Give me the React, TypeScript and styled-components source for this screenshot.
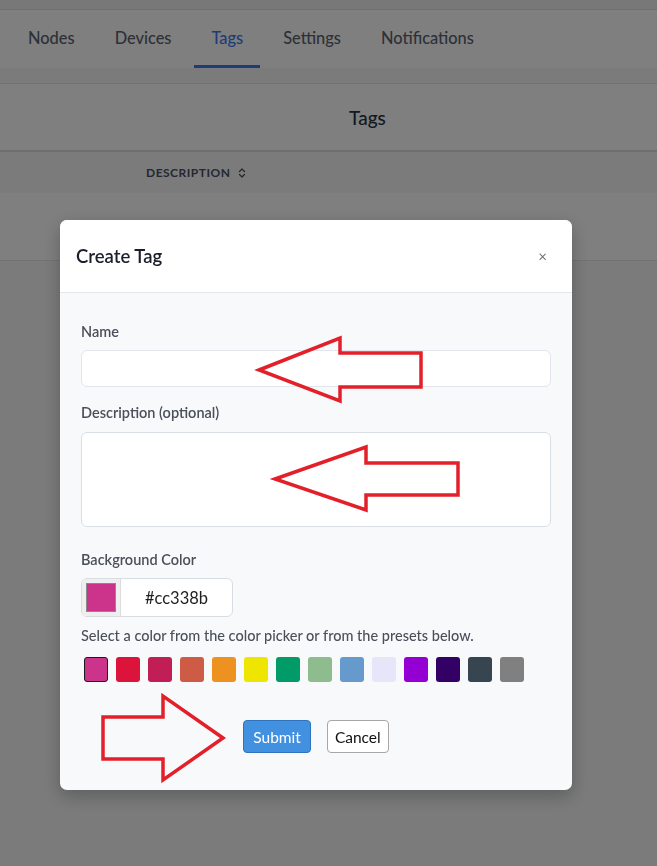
import React, { useState } from 'react';
import styled, { createGlobalStyle } from 'styled-components';
import { ChevronsUpDown } from 'lucide-react';

const GlobalStyle = createGlobalStyle`
  * {
    box-sizing: border-box;
  }

  body {
    margin: 0;
    font-family: Lato, "Liberation Sans", sans-serif;
    background: #f6f7f9;
    color: #1a202c;
  }
`;

const Page = styled.div`
  min-height: 100vh;
  background: #f6f7f9;
`;

const TopStrip = styled.div`
  height: 10px;
  background: #f0f1f3;
  border-bottom: 1px solid #dcdfe4;
`;

const TabBar = styled.nav`
  height: 58px;
  background: #ffffff;
  display: flex;
  align-items: stretch;
  gap: 6px;
  padding-left: 11px;
`;

const Tab = styled.div<{ active?: boolean }>`
  display: flex;
  align-items: center;
  padding: 0 17px;
  font-size: 16.4px;
  font-weight: 500;
  color: ${props => (props.active ? '#3d78f0' : '#5a6270')};
  border-bottom: 3px solid ${props => (props.active ? '#3d78f0' : 'transparent')};
`;

const Spacer = styled.div`
  height: 15px;
  background: #f6f7f9;
`;

const PanelHeader = styled.header`
  height: 69px;
  background: #ffffff;
  border-top: 1px solid #e2e5ea;
  border-bottom: 2px solid #d8dce2;
  display: flex;
  align-items: center;
  justify-content: center;
  padding-left: 78px;
  font-size: 19px;
  font-weight: 500;
  color: #2d3340;
`;

const TableHead = styled.div`
  height: 41px;
  background: #f6f7f9;
  display: flex;
  align-items: center;
  padding-left: 146px;
  gap: 6px;
  font-size: 12px;
  font-weight: 700;
  letter-spacing: 0.5px;
  color: #4a5060;
`;

const TableRow = styled.div`
  height: 68px;
  background: #ffffff;
  border-bottom: 1px solid #e2e5ea;
`;

const Overlay = styled.div`
  position: fixed;
  inset: 0;
  background: rgba(0, 0, 0, 0.5);
  display: flex;
  align-items: flex-start;
  padding: 220px 0 0 60px;
`;

const Modal = styled.div`
  width: 512px;
  border-radius: 7px;
  overflow: hidden;
  background: #f8f9fb;
  box-shadow: 0 6px 18px rgba(0, 0, 0, 0.25);
`;

const ModalHeader = styled.div`
  height: 73px;
  background: #ffffff;
  border-bottom: 1px solid #e3e6ea;
  display: flex;
  align-items: center;
  justify-content: space-between;
  padding: 0 25px 0 16px;
`;

const ModalTitle = styled.h2`
  margin: 0;
  font-size: 18.5px;
  font-weight: 600;
  color: #1a1f2b;
`;

const CloseButton = styled.button`
  border: none;
  background: none;
  padding: 0;
  font-family: inherit;
  font-size: 15px;
  color: #6b7280;
  cursor: pointer;
  line-height: 1;
`;

const ModalBody = styled.div`
  padding: 29px 21px 37px 21px;
  display: flex;
  flex-direction: column;
`;

const Label = styled.label<{ gap?: number }>`
  display: block;
  font-size: 14.5px;
  line-height: 20px;
  font-weight: 600;
  color: #4a4f5a;
  margin-top: ${props => props.gap ?? 0}px;
  margin-bottom: 8px;
`;

const TextInput = styled.input`
  width: 100%;
  height: 37px;
  border: 1px solid #e2e6ec;
  border-radius: 6px;
  background: #ffffff;
  padding: 0 12px;
  font-family: inherit;
  font-size: 14px;
  outline: none;
`;

const TextArea = styled.textarea`
  width: 100%;
  height: 95px;
  margin-top: 1px;
  border: 1px solid #dadfe6;
  border-radius: 6px;
  background: #ffffff;
  padding: 8px 12px;
  font-family: inherit;
  font-size: 14px;
  resize: none;
  outline: none;
`;

const ColorField = styled.div`
  width: 152px;
  height: 39px;
  display: flex;
  border: 1px solid #d8dce3;
  border-radius: 6px;
  overflow: hidden;
  background: #ffffff;
`;

const ColorWell = styled.div`
  width: 39px;
  flex-shrink: 0;
  background: #efefef;
  border-right: 1px solid #dcdcdc;
  display: flex;
  align-items: center;
  justify-content: center;
`;

const ColorChip = styled.div<{ color: string }>`
  width: 30px;
  height: 29px;
  background: ${props => props.color};
  border: 1px solid #8a8a8a;
`;

const ColorText = styled.div`
  flex: 1;
  display: flex;
  align-items: center;
  justify-content: center;
  font-size: 16.5px;
  color: #1f1f1f;
`;

const HelpText = styled.p`
  margin: 10px 0 0 0;
  font-size: 14.5px;
  line-height: 18px;
  font-weight: 500;
  color: #4a4f5a;
`;

const Swatches = styled.div`
  display: flex;
  gap: 8px;
  margin: 12px 0 0 3px;
`;

const Swatch = styled.button<{ color: string; selected?: boolean }>`
  width: 24px;
  height: 25px;
  padding: 0;
  border-radius: 3px;
  background: ${props => props.color};
  border: ${props => (props.selected ? '1.5px solid #1a1a1a' : 'none')};
  cursor: pointer;
`;

const Actions = styled.div`
  display: flex;
  justify-content: center;
  gap: 16px;
  margin-top: 38px;
`;

const Button = styled.button<{ primary?: boolean }>`
  height: 33px;
  padding: 0 ${props => (props.primary ? 9 : 7)}px;
  border-radius: 4px;
  font-family: inherit;
  font-size: 15.5px;
  cursor: pointer;
  background: ${props => (props.primary ? '#4290e0' : '#ffffff')};
  color: ${props => (props.primary ? '#ffffff' : '#111111')};
  border: 1px solid ${props => (props.primary ? '#2f73bf' : '#a7a7a7')};
`;

const Annotations = styled.svg`
  position: fixed;
  inset: 0;
  width: 100%;
  height: 100%;
  pointer-events: none;
`;

const presets = [
  '#cc338b',
  '#dc143c',
  '#c21e56',
  '#cd5b45',
  '#ed9121',
  '#eee600',
  '#009b67',
  '#8fbc8f',
  '#6699cc',
  '#e6e6fa',
  '#9400d3',
  '#330066',
  '#36454f',
  '#808080',
];

const tabs = ['Nodes', 'Devices', 'Tags', 'Settings', 'Notifications'];

// red hand-drawn annotation arrows sitting on top of the screenshot
const arrows = [
  '259,370 340,338 340,353 421,353 421,387 340,387 340,401',
  '275,479 366,447 366,463 458,463 458,495 366,495 366,510',
  '223,738 163,696 163,717 103,717 103,759 163,759 163,780',
];

const App: React.FC = () => {
  const [color, setColor] = useState('#cc338b');

  return (
    <>
      <GlobalStyle />
      <Page>
        <TopStrip />
        <TabBar>
          {tabs.map(tab => (
            <Tab key={tab} active={tab === 'Tags'}>
              {tab}
            </Tab>
          ))}
        </TabBar>
        <Spacer />
        <PanelHeader>Tags</PanelHeader>
        <TableHead>
          DESCRIPTION
          <ChevronsUpDown size={12} strokeWidth={2.5} />
        </TableHead>
        <TableRow />
      </Page>

      <Overlay>
        <Modal>
          <ModalHeader>
            <ModalTitle>Create Tag</ModalTitle>
            <CloseButton>×</CloseButton>
          </ModalHeader>
          <ModalBody>
            <Label>Name</Label>
            <TextInput />
            <Label gap={16}>Description (optional)</Label>
            <TextArea />
            <Label gap={23}>Background Color</Label>
            <ColorField>
              <ColorWell>
                <ColorChip color={color} />
              </ColorWell>
              <ColorText>{color}</ColorText>
            </ColorField>
            <HelpText>Select a color from the color picker or from the presets below.</HelpText>
            <Swatches>
              {presets.map(preset => (
                <Swatch
                  key={preset}
                  color={preset}
                  selected={preset === color}
                  onClick={() => setColor(preset)}
                />
              ))}
            </Swatches>
            <Actions>
              <Button primary>Submit</Button>
              <Button>Cancel</Button>
            </Actions>
          </ModalBody>
        </Modal>
      </Overlay>

      <Annotations viewBox="0 0 657 866" preserveAspectRatio="xMinYMin meet">
        {arrows.map(points => (
          <polygon
            key={points}
            points={points}
            fill="none"
            stroke="#e3202a"
            strokeWidth={3.5}
            strokeLinejoin="miter"
          />
        ))}
      </Annotations>
    </>
  );
};

export default App;
